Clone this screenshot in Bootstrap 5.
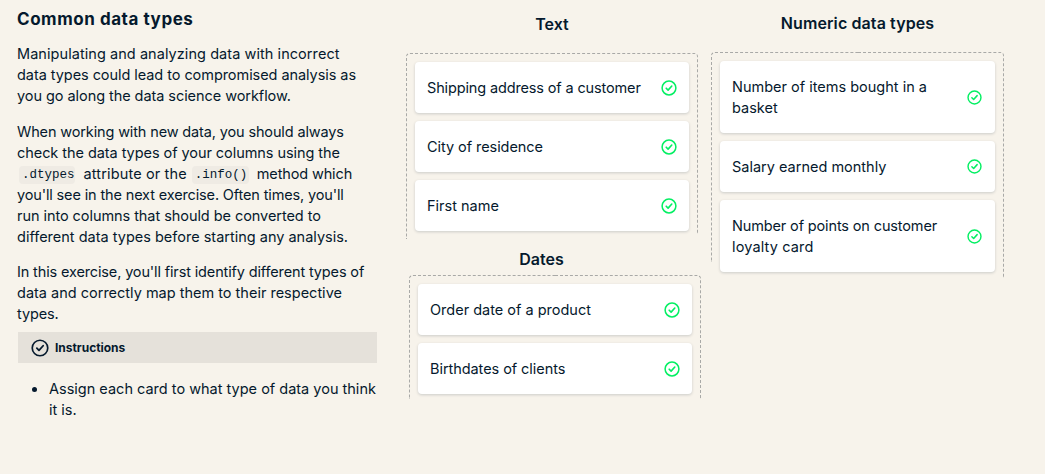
<!DOCTYPE html>
<html lang="en">
<head>
<meta charset="utf-8">
<meta name="viewport" content="width=device-width, initial-scale=1">
<title>Common data types</title>
<link href="https://cdn.jsdelivr.net/npm/bootstrap@5.3.0/dist/css/bootstrap.min.css" rel="stylesheet">
<style>
body{background:#f7f3eb;color:#05192d;font:14.5px/21px Inter,"Liberation Sans",sans-serif;height:474px;overflow:hidden}
.page-grid{display:grid;grid-template-columns:377px 334px 293px}
.lesson{padding-top:8px;padding-left:17px;white-space:nowrap}
.lesson h1{font-size:17px;font-weight:700;line-height:22px;letter-spacing:.55px;margin:0 0 13px}
.lesson p{margin:0 0 15px}
.lesson p + p{margin-bottom:14px}
.lesson p:last-of-type{margin-bottom:8px}
.track-1{letter-spacing:-.14px}
.track-2{letter-spacing:-.06px}
.track-3{letter-spacing:.06px}
.track-4{letter-spacing:.14px}
code.chip{display:inline-block;height:18px;vertical-align:top;margin-top:3px;padding:0 3px;border-radius:4px;background:#efebe4;color:#05192d;font:12.5px/18px "Liberation Mono",monospace}
.chip-a{width:56px;margin-left:2px;margin-right:8.5px}
.chip-b{width:57px;margin-left:5px;margin-right:8px}
.instr{height:31px;background:#e5e1da;padding-left:12.5px;gap:6.5px;margin-left:1px;font-size:12px;font-weight:700;letter-spacing:-.03px}
.todo{margin:15px 0 0;padding-left:32px}
.todo li::marker{font-size:17px}
.middle-zones{padding-left:29px}
.zone-title{font-size:16px;font-weight:600;text-align:center;line-height:22px;margin:0 0 18px}
.title-text{padding-top:13px;width:292px}
.title-dates{width:271px;margin:9px 0 5px}
.title-num{padding-top:12px;letter-spacing:.1px}
.zone{position:relative;display:flex;flex-direction:column;gap:8px;padding:9px 9px 0}
/* The left and right dashed edges of a drop zone end at different heights. */
.zone::before,.zone::after{content:"";position:absolute;top:0;width:50%;border-top:1px dashed #a9a9a7;pointer-events:none}
.zone::before{left:0;height:var(--left-h);border-left:1px dashed #a9a9a7;border-top-left-radius:4px}
.zone::after{right:0;height:var(--right-h);border-right:1px dashed #a9a9a7;border-top-right-radius:4px}
.zone-text{--left-h:186px;--right-h:181px;width:292px;height:186px}
.zone-dates{--left-h:124px;--right-h:124px;width:292px;margin-left:3px}
.zone-num{--left-h:210px;--right-h:226px;width:293px}
.answer{height:51px;border:0;border-radius:4px;background:#fff;box-shadow:0 1px 3px rgba(5,25,45,.18);padding:0 12.5px 0 12px;display:flex;flex:none;align-items:center;justify-content:space-between;white-space:nowrap}
.zone-num .answer{padding-right:13.5px}
.answer.tall{height:72px}
.answer svg{color:#03ef62;flex:none}
</style>
<script src="https://cdn.jsdelivr.net/npm/bootstrap@5.3.0/dist/js/bootstrap.bundle.min.js"></script>
</head>
<body>
<svg width="0" height="0" class="position-absolute" aria-hidden="true"><symbol id="ok" viewBox="0 0 16 16"><circle cx="8" cy="8" r="6.9" fill="none" stroke="currentColor" stroke-width="1.5"/><path d="M5.2 8.2 7.1 10.1 10.8 6" fill="none" stroke="currentColor" stroke-width="1.6" stroke-linecap="round" stroke-linejoin="round"/></symbol></svg>
<main class="page-grid">
<section class="lesson">
<h1>Common data types</h1>
<p><span class="track-3">Manipulating and analyzing data with incorrect</span><br><span class="track-2">data types could lead to compromised analysis as</span><br><span class="track-2">you go along the data science workflow.</span></p>
<p><span class="track-1">When working with new data, you should always</span><br><span class="track-2">check the data types of your columns using the</span><br><code class="chip chip-a">.dtypes</code><span class="track-4">attribute or the</span><code class="chip chip-b">.info()</code><span class="track-1">method which</span><br><span class="track-1">you'll see in the next exercise. Often times, you'll</span><br><span class="track-2">run into columns that should be converted to</span><br><span>different data types before starting any analysis.</span></p>
<p><span class="track-1">In this exercise, you'll first identify different types of</span><br>data and correctly map them to their respective<br><span class="track-1">types.</span></p>
<div class="instr d-flex align-items-center"><svg width="18" height="18"><use href="#ok"/></svg><span>Instructions</span></div>
<ul class="todo"><li>Assign each card to what type of data you think<br>it is.</li></ul>
</section>
<section class="middle-zones">
<h2 class="zone-title title-text">Text</h2>
<div class="zone zone-text">
<div class="answer"><span class="track-1">Shipping address of a customer</span><svg width="16" height="16"><use href="#ok"/></svg></div>
<div class="answer"><span class="track-2">City of residence</span><svg width="16" height="16"><use href="#ok"/></svg></div>
<div class="answer"><span>First name</span><svg width="16" height="16"><use href="#ok"/></svg></div>
</div>
<h2 class="zone-title title-dates">Dates</h2>
<div class="zone zone-dates">
<div class="answer"><span>Order date of a product</span><svg width="16" height="16"><use href="#ok"/></svg></div>
<div class="answer"><span class="track-2">Birthdates of clients</span><svg width="16" height="16"><use href="#ok"/></svg></div>
</div>
</section>
<section>
<h2 class="zone-title title-num">Numeric data types</h2>
<div class="zone zone-num">
<div class="answer tall"><span>Number of items bought in a<br>basket</span><svg width="15" height="15"><use href="#ok"/></svg></div>
<div class="answer"><span>Salary earned monthly</span><svg width="15" height="15"><use href="#ok"/></svg></div>
<div class="answer tall"><span><span class="track-1">Number of points on customer</span><br><span class="track-4">loyalty card</span></span><svg width="15" height="15"><use href="#ok"/></svg></div>
</div>
</section>
</main>
</body>
</html>
